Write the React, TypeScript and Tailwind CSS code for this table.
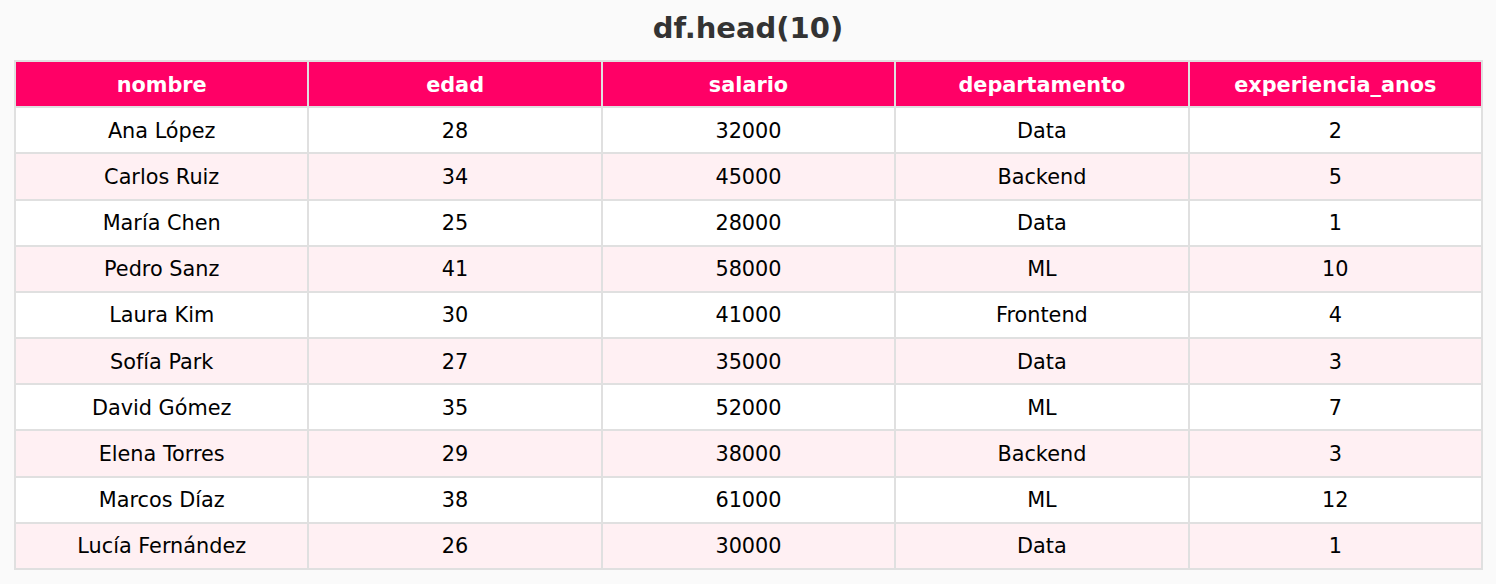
const columns = ["nombre", "edad", "salario", "departamento", "experiencia_anos"];

const rows: (string | number)[][] = [
  ["Ana López", 28, 32000, "Data", 2],
  ["Carlos Ruiz", 34, 45000, "Backend", 5],
  ["María Chen", 25, 28000, "Data", 1],
  ["Pedro Sanz", 41, 58000, "ML", 10],
  ["Laura Kim", 30, 41000, "Frontend", 4],
  ["Sofía Park", 27, 35000, "Data", 3],
  ["David Gómez", 35, 52000, "ML", 7],
  ["Elena Torres", 29, 38000, "Backend", 3],
  ["Marcos Díaz", 38, 61000, "ML", 12],
  ["Lucía Fernández", 26, 30000, "Data", 1],
];

export default function App() {
  return (
    <div className="w-[1496px] h-[584px] bg-[#fafafa] font-['DejaVu_Sans',sans-serif]">
      {/* Title */}
      <div className="h-[56px] flex items-center justify-center">
        <h1 className="text-[29px] font-bold text-[#333333] leading-none">df.head(10)</h1>
      </div>

      {/* Table */}
      <div className="ml-[14px] mt-[4px] w-[1469px] h-[510px] grid grid-cols-5 grid-rows-[repeat(11,1fr)] gap-[2px] p-[2px] bg-[#e0e0e0]">
        {columns.map((c) => (
          <div
            key={c}
            className="bg-[#ff0066] text-white font-bold text-[20.8px] flex items-center justify-center pt-[3px]"
          >
            {c}
          </div>
        ))}
        {rows.map((r, i) =>
          r.map((v, j) => (
            <div
              key={`${i}-${j}`}
              className={`${i % 2 === 1 ? "bg-[#fff0f3]" : "bg-white"} text-black text-[20.8px] flex items-center justify-center pt-[2px]`}
            >
              {v}
            </div>
          ))
        )}
      </div>
    </div>
  );
}
